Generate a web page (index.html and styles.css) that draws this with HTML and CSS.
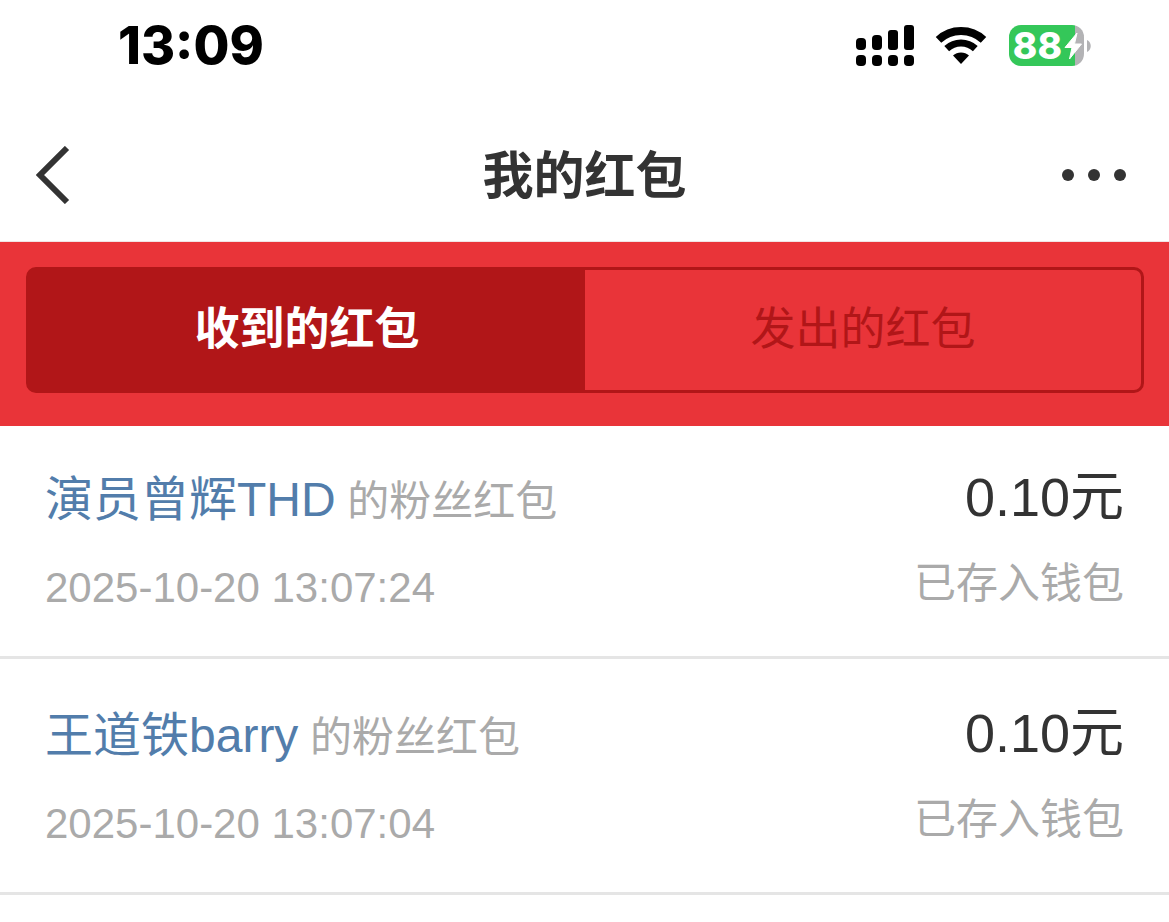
FILE: index.html
```html
<!DOCTYPE html>
<html lang="zh-CN">
<head>
    <meta charset="UTF-8">
    <meta name="viewport" content="width=device-width, initial-scale=1.0">
    <title>我的红包</title>
    <link rel="stylesheet" href="styles.css">
</head>
<body>
    <div class="status-bar">
        <span class="clock">13:09</span>
        <div class="status-icons">
            <svg class="signal" width="58" height="41" viewBox="0 0 58 41">
                <rect x="0" y="13" width="10" height="12" rx="4"/>
                <rect x="16" y="10" width="10" height="15" rx="4"/>
                <rect x="32" y="5" width="10" height="20" rx="3"/>
                <rect x="48" y="0" width="10" height="25" rx="3"/>
                <rect x="0" y="30" width="10" height="11" rx="4"/>
                <rect x="16" y="30" width="10" height="11" rx="4"/>
                <rect x="32" y="30" width="10" height="11" rx="4"/>
                <rect x="48" y="30" width="10" height="11" rx="4"/>
            </svg>
            <svg class="wifi" width="52" height="38" viewBox="0 0 52 38">
                <path d="M3.5 12.9A33 33 0 0 1 48.5 12.9" fill="none" stroke="#000" stroke-width="8"/>
                <path d="M11.7 21.6A21 21 0 0 1 40.3 21.6" fill="none" stroke="#000" stroke-width="7"/>
                <path d="M26 37L18 28.6A11.7 11.7 0 0 1 34 28.6Z"/>
            </svg>
            <div class="battery">
                <span class="battery-level">88</span>
                <svg class="bolt" width="22" height="28" viewBox="0 0 22 28">
                    <path d="M15 1L3 15.5H10L7.5 27L19.5 12H12.5Z" fill="#fff" stroke="#fff" stroke-width="1" stroke-linejoin="round"/>
                </svg>
            </div>
            <svg class="battery-cap" width="4" height="12" viewBox="0 0 4 12">
                <path d="M0 0C5 2 5 10 0 12Z" fill="#b3b3b5"/>
            </svg>
        </div>
    </div>

    <header class="nav">
        <button class="nav-button" aria-label="返回">
            <svg width="34" height="58" viewBox="0 0 34 58">
                <path d="M31 2L4 29L31 56" fill="none" stroke="#333" stroke-width="6"/>
            </svg>
        </button>
        <h1>我的红包</h1>
        <button class="nav-button more" aria-label="更多">
            <svg width="64" height="12" viewBox="0 0 64 12">
                <circle cx="6" cy="6" r="6" fill="#333"/>
                <circle cx="32" cy="6" r="6" fill="#333"/>
                <circle cx="58" cy="6" r="6" fill="#333"/>
            </svg>
        </button>
    </header>

    <div class="tabs-wrap">
        <div class="tabs">
            <button class="tab active">收到的红包</button>
            <button class="tab">发出的红包</button>
        </div>
    </div>

    <ul class="list">
        <li class="item">
            <div class="info">
                <p class="title"><a class="name" href="#">演员曾辉THD</a> 的粉丝红包</p>
                <p>2025-10-20 13:07:24</p>
            </div>
            <div class="pay">
                <p class="amount">0.10元</p>
                <p>已存入钱包</p>
            </div>
        </li>
        <li class="item">
            <div class="info">
                <p class="title"><a class="name" href="#">王道铁barry</a> 的粉丝红包</p>
                <p>2025-10-20 13:07:04</p>
            </div>
            <div class="pay">
                <p class="amount">0.10元</p>
                <p>已存入钱包</p>
            </div>
        </li>
    </ul>
</body>
</html>
```

FILE: styles.css
```css
body {
    margin: 0;
    background-color: #fff;
    color: #333;
    font-family: "Liberation Sans", "Noto Sans CJK SC", sans-serif;
}
svg {
    display: block;
}
button {
    margin: 0;
    padding: 0;
    border: none;
    background: none;
    font-family: inherit;
    cursor: pointer;
}

/* Phone status bar */
.status-bar {
    display: flex;
    justify-content: space-between;
    align-items: center;
    height: 91px;
    margin-bottom: 18px;
    padding: 0 78px 0 118px;
    color: #000;
}
.clock {
    font-family: Inter, sans-serif;
    font-size: 52px;
    font-weight: 800;
}
.status-icons {
    display: flex;
    align-items: center;
}
.wifi {
    margin: 0 22px 0 21px;
}
.battery {
    display: flex;
    align-items: center;
    justify-content: flex-end;
    width: 75px;
    height: 41px;
    border-radius: 12px;
    background: linear-gradient(to right, #34c759 66px, #b3b3b5 66px);
}
.battery-level {
    color: #fff;
    font-family: Inter, sans-serif;
    font-size: 37px;
    font-weight: 800;
}
.battery-cap {
    margin-left: 3px;
}

/* Title bar */
.nav {
    display: flex;
    justify-content: space-between;
    align-items: center;
    height: 132px;
    padding: 0 36px;
    border-bottom: 1px solid #f0e4e4;
}
.nav-button {
    display: flex;
    box-sizing: border-box;
    width: 100px;
}
.nav-button.more {
    justify-content: flex-end;
    padding-right: 7px;
}
.nav h1 {
    margin: 0;
    padding-top: 4px;
    font-size: 51px;
    line-height: 60px;
}

/* Tabs */
.tabs-wrap {
    padding: 25px 25px 33px 26px;
    background-color: #e93439;
}
.tabs {
    display: flex;
    border: 3px solid #b11618;
    border-radius: 10px;
}
.tab {
    flex: 1;
    height: 120px;
    color: #b11618;
    font-size: 45px;
    line-height: 60px;
}
.tab.active {
    background-color: #b11618;
    color: #fff;
    font-weight: 600;
}

/* Red packet list */
.list {
    margin: 0;
    padding: 0;
    list-style: none;
}
.item {
    display: flex;
    justify-content: space-between;
    padding: 37px 45px 38px;
    border-bottom: 3px solid #e5e5e5;
    color: #aaa;
    font-size: 42px;
    line-height: 60px;
}
.item:first-child {
    padding-top: 34px;
}
.item p {
    margin: 0;
}
.info,
.pay {
    display: flex;
    flex-direction: column;
    gap: 14px;
}
.pay {
    gap: 20px;
    text-align: right;
}
.item .title {
    line-height: 84px;
}
.name {
    color: #527dab;
    font-size: 48px;
    line-height: 60px;
    text-decoration: none;
}
.item .amount {
    color: #333;
    font-size: 54px;
    line-height: 74px;
}
```
